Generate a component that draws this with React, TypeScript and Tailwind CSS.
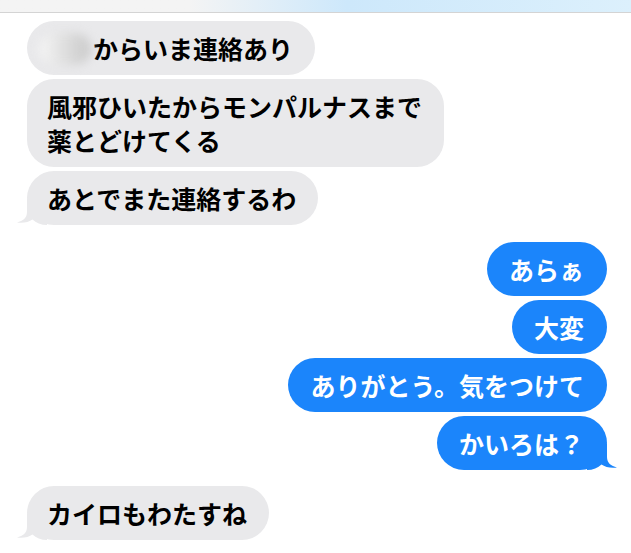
import React from 'react';

type Side = 'in' | 'out';

interface BubbleProps {
  side: Side;
  tail?: boolean;
  children: React.ReactNode;
}

const Tail: React.FC<{ side: Side }> = ({ side }) => (
  <svg
    width="30"
    height="26"
    viewBox="0 0 30 26"
    className={
      side === 'in'
        ? 'absolute left-[-10px] bottom-0'
        : 'absolute right-[-10px] bottom-0 -scale-x-100'
    }
  >
    <path
      d="M10 0 V13 C10 19 6 22 0 23.5 C6 24.5 12 23 15.5 20.5 C19 24 24 26 30 26 V0 Z"
      fill={side === 'in' ? '#e9e9eb' : '#1b85fb'}
    />
  </svg>
);

const Bubble: React.FC<BubbleProps> = ({ side, tail, children }) => (
  <div
    className={
      side === 'in'
        ? 'relative self-start rounded-[27px] bg-[#e9e9eb] text-black pl-[20px] pr-[22px] py-[10px]'
        : 'relative self-end rounded-[27px] bg-[#1b85fb] text-white pl-[22px] pr-[23px] py-[10px]'
    }
  >
    {tail && <Tail side={side} />}
    <div className="relative text-[25px] leading-[34px] font-semibold whitespace-pre-line">
      {children}
    </div>
  </div>
);

export default function App() {
  return (
    <div className="w-[631px] h-[553px] overflow-hidden bg-white font-['Noto_Sans_CJK_JP','Noto_Sans',sans-serif]">
      <div className="h-[13px] border-b border-[#d4d4d4] bg-gradient-to-r from-[#f4f4f4] from-30% via-[#cde8fb] via-55% to-[#dcf0fc]" />

      <div className="flex flex-col pl-[27px] pr-[24px] pt-[8px]">
        {/* incoming */}
        <div className="flex flex-col gap-[4px]">
          <Bubble side="in">
            <span className="inline-block w-[52px] h-[32px] ml-[-8px] align-[-6px] rounded-full bg-gradient-to-r from-[#f6f6f6] via-[#dedede] to-[#c9c9c9] blur-[5px]" />
            <span className="ml-[2px]">からいま連絡あり</span>
          </Bubble>
          <Bubble side="in">{'風邪ひいたからモンパルナスまで\n薬とどけてくる'}</Bubble>
          <Bubble side="in" tail>
            あとでまた連絡するわ
          </Bubble>
        </div>

        {/* outgoing */}
        <div className="flex flex-col gap-[4px] mt-[17px]">
          <Bubble side="out">あらぁ</Bubble>
          <Bubble side="out">大変</Bubble>
          <Bubble side="out">ありがとう。気をつけて</Bubble>
          <Bubble side="out" tail>
            かいろは？
          </Bubble>
        </div>

        <div className="flex flex-col mt-[16px]">
          <Bubble side="in" tail>
            カイロもわたすね
          </Bubble>
        </div>
      </div>
    </div>
  );
}
